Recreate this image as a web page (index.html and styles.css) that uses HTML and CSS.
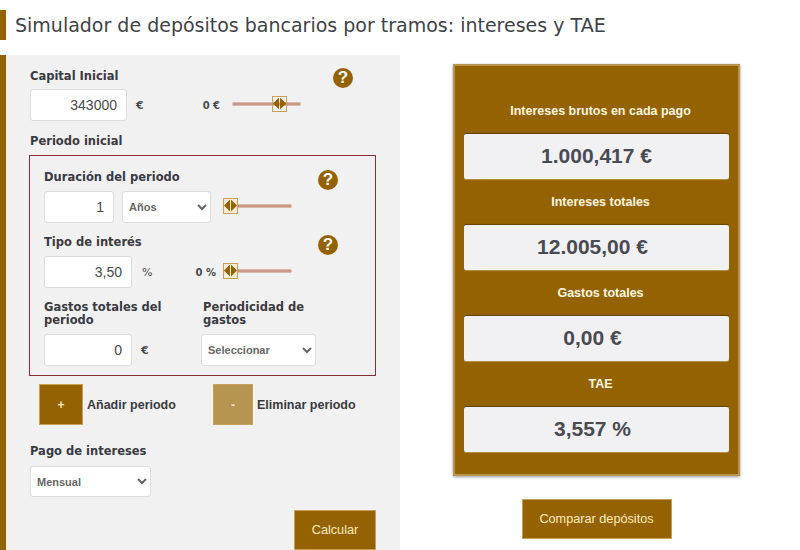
FILE: index.html
```html
<!DOCTYPE html>
<html lang="es">
  <head>
    <meta charset="UTF-8" />
    <title>Simulador de depósitos bancarios por tramos</title>
    <link rel="stylesheet" href="styles.css">
  </head>
  <body>
    <h1 class="page-title">Simulador de depósitos bancarios por tramos: intereses y TAE</h1>
    <div class="main-row">
      <form class="panel" autocomplete="off">
        <div class="label-row">
          <label class="field-label">Capital Inicial</label>
          <span class="help-icon capital-help">?</span>
        </div>
        <div class="input-row">
          <input class="num-input capital-input" type="text" value="343000" />
          <span class="unit">€</span>
          <span class="slider-min capital-min">0 €</span>
          <div class="slider capital-slider"><span class="thumb capital-thumb"></span></div>
        </div>
        <div class="field-label period-title">Periodo inicial</div>

        <div class="period-box">
          <div class="label-row">
            <label class="field-label">Duración del periodo</label>
            <span class="help-icon">?</span>
          </div>
          <div class="input-row">
            <input class="num-input duration-input" type="text" value="1" />
            <select class="select years-select"><option>Años</option></select>
            <div class="slider duration-slider"><span class="thumb"></span></div>
          </div>

          <div class="label-row rate-label">
            <label class="field-label">Tipo de interés</label>
            <span class="help-icon">?</span>
          </div>
          <div class="input-row">
            <input class="num-input rate-input" type="text" value="3,50" />
            <span class="unit percent">%</span>
            <span class="slider-min rate-min">0 %</span>
            <div class="slider rate-slider"><span class="thumb"></span></div>
          </div>

          <div class="costs-row">
            <div class="costs-col">
              <label class="field-label two-lines">Gastos totales del periodo</label>
              <div class="input-row">
                <input class="num-input rate-input" type="text" value="0" />
                <span class="unit">€</span>
              </div>
            </div>
            <div class="freq-col">
              <label class="field-label two-lines">Periodicidad de gastos</label>
              <select class="select freq-select"><option>Seleccionar</option></select>
            </div>
          </div>
        </div>

        <div class="period-actions">
          <div class="action add-action">
            <button type="button" class="square-btn">+</button>
            <span>Añadir periodo</span>
          </div>
          <div class="action">
            <button type="button" class="square-btn light">-</button>
            <span>Eliminar periodo</span>
          </div>
        </div>

        <label class="field-label payment-label">Pago de intereses</label>
        <select class="select payment-select"><option>Mensual</option></select>

        <div class="submit-row">
          <button type="button" class="main-btn calc-btn">Calcular</button>
        </div>
      </form>

      <div class="results-col">
        <div class="results">
          <div class="result-title first">Intereses brutos en cada pago</div>
          <div class="result-value">1.000,417 €</div>
          <div class="result-title">Intereses totales</div>
          <div class="result-value">12.005,00 €</div>
          <div class="result-title">Gastos totales</div>
          <div class="result-value">0,00 €</div>
          <div class="result-title">TAE</div>
          <div class="result-value">3,557 %</div>
        </div>
        <button type="button" class="main-btn compare-btn">Comparar depósitos</button>
      </div>
    </div>
  </body>
</html>
```

FILE: styles.css
```css
html,
body {
  height: 100%;
  overflow: hidden;
}
body {
  margin: 0;
  background: #fff;
  color: #3a3a42;
  font-family: "Liberation Sans", Arial, sans-serif;
}
.page-title {
  margin: 10px 0 0 0;
  height: 30px;
  line-height: 30px;
  padding-left: 9px;
  border-left: 6px solid #946300;
  font-family: "DejaVu Sans", sans-serif;
  font-size: 19px;
  font-weight: 400;
  color: #3f4348;
}
.main-row {
  display: flex;
  margin-top: 15px;
}
.panel {
  box-sizing: border-box;
  width: 400px;
  height: 495px;
  flex: none;
  border-left: 6px solid #946300;
  background: #f1f1f1;
  padding: 14px 23px 0 24px;
}
.field-label {
  display: block;
  font-family: "DejaVu Sans", sans-serif;
  font-size: 11.5px;
  font-weight: 700;
  line-height: 14px;
  color: #3a3a42;
}
.label-row {
  display: flex;
  justify-content: space-between;
  align-items: center;
  height: 14px;
}
.help-icon {
  width: 20px;
  height: 20px;
  border-radius: 50%;
  background: #946300;
  color: #fff;
  font-family: "Liberation Sans", sans-serif;
  font-size: 17px;
  font-weight: 700;
  line-height: 20px;
  text-align: center;
  flex: none;
  margin-right: 37px;
  margin-top: 6px;
}
.capital-help {
  margin-right: 24px;
  margin-top: 4px;
}
.input-row {
  display: flex;
  align-items: center;
  margin-top: 6px;
}
.num-input,
.select {
  box-sizing: border-box;
  height: 32px;
  background: #fff;
  border: 1px solid #dcdcdc;
  border-radius: 3px;
  font-family: "Liberation Sans", sans-serif;
  color: #555;
}
.num-input {
  text-align: right;
  font-size: 14px;
  font-weight: 400;
  padding: 0 9px;
  color: #4a4a4a;
}
.select {
  font-size: 11px;
  font-weight: 700;
  padding-left: 2px;
  color: #666;
}
.capital-input {
  width: 97px;
}
.unit {
  margin-left: 9px;
  font-family: "DejaVu Sans", sans-serif;
  font-size: 11px;
  font-weight: 700;
  color: #4a4a4a;
}
.percent {
  margin-left: 10px;
  font-weight: 400;
}
.slider-min {
  font-family: "DejaVu Sans", sans-serif;
  font-size: 10px;
  font-weight: 700;
  color: #4a4a4a;
}
.capital-min {
  margin-left: 59px;
}
.slider {
  position: relative;
  width: 67px;
  height: 2px;
  margin-bottom: 3px;
  border: 1px solid #d8b9a8;
  border-radius: 2px;
  background: #c9968a;
}
.capital-slider {
  margin-left: 12px;
}
.thumb {
  position: absolute;
  left: -1px;
  top: -7px;
  box-sizing: border-box;
  width: 15px;
  height: 16px;
  border: 1px solid #c8a05a;
  background: #f6ecd8;
}
.thumb::before,
.thumb::after {
  content: "";
  position: absolute;
  top: 1px;
  width: 6px;
  height: 12px;
  background: #946300;
}
.thumb::before {
  left: 0;
  clip-path: polygon(100% 0, 100% 100%, 0 50%);
}
.thumb::after {
  right: 0;
  clip-path: polygon(0 0, 100% 50%, 0 100%);
}
.capital-thumb {
  left: 39px;
  background: none;
}
.period-title {
  margin-top: 13px;
}
.period-box {
  box-sizing: border-box;
  width: 347px;
  height: 221px;
  margin: 7px 0 0 -1px;
  border: 1px solid #8b2e38;
  padding: 14px 0 0 14px;
}
.period-box .input-row {
  margin-top: 7px;
}
.duration-input {
  width: 70px;
}
.years-select {
  width: 89px;
  margin-left: 8px;
}
.duration-slider {
  margin-left: 12px;
}
.rate-label {
  margin-top: 12px;
}
.rate-input {
  width: 88px;
}
.rate-min {
  margin-left: 43px;
}
.rate-slider {
  margin-left: 7px;
}
.costs-row {
  display: flex;
  margin-top: 13px;
}
.costs-col {
  width: 159px;
}
.freq-col {
  width: 116px;
}
.two-lines {
  height: 26px;
  line-height: 13px;
}
.freq-col .select {
  margin: 7px 0 0 -2px;
}
.freq-select {
  width: 115px;
}
.period-actions {
  display: flex;
  margin-top: 8px;
  padding-left: 9px;
  font-size: 12.5px;
  font-weight: 700;
  color: #3a3a42;
}
.action {
  display: flex;
  align-items: center;
  gap: 4px;
}
.add-action {
  width: 174px;
}
.square-btn {
  width: 44px;
  height: 41px;
  border: 1px solid #c8a05a;
  background: #946300;
  color: #f6e7c4;
  font-size: 12px;
  font-weight: 700;
  padding: 0;
}
.square-btn.light {
  width: 40px;
  background: #b59550;
}
.payment-label {
  margin-top: 19px;
}
.payment-select {
  display: block;
  width: 121px;
  height: 31px;
  margin-top: 8px;
}
.submit-row {
  display: flex;
  justify-content: flex-end;
  margin: 13px 1px 0 0;
}
.main-btn {
  border: 1px solid #c8a05a;
  background: #946300;
  color: #fbe9bf;
  font-family: "Liberation Sans", sans-serif;
  font-size: 12.7px;
  padding: 0;
}
.calc-btn {
  width: 82px;
  height: 40px;
}
.results-col {
  flex: none;
  display: flex;
  flex-direction: column;
  align-items: center;
  margin: 9px 0 0 53px;
}
.results {
  box-sizing: border-box;
  width: 287px;
  height: 412px;
  background: #946300;
  border: 2px solid #b59550;
  box-shadow: 0 1px 3px rgba(0, 0, 0, 0.4);
  padding: 0 9px;
}
.result-title {
  height: 20px;
  line-height: 20px;
  margin: 13px 0;
  padding-left: 8px;
  text-align: center;
  font-size: 12.5px;
  font-weight: 700;
  color: #fff6e0;
}
.result-title.first {
  margin-top: 35px;
}
.result-value {
  box-sizing: border-box;
  height: 45px;
  line-height: 44px;
  padding-right: 8px;
  background: #f1f1f3;
  border-radius: 2px;
  box-shadow: 0 -1px 1px rgba(0, 0, 0, 0.35), 0 1px 1px rgba(255, 255, 255, 0.3);
  text-align: center;
  font-size: 21px;
  font-weight: 700;
  color: #4a4a52;
}
.first + .result-value {
  padding-right: 0;
}
.compare-btn {
  width: 150px;
  height: 40px;
  margin-top: 23px;
}
```
